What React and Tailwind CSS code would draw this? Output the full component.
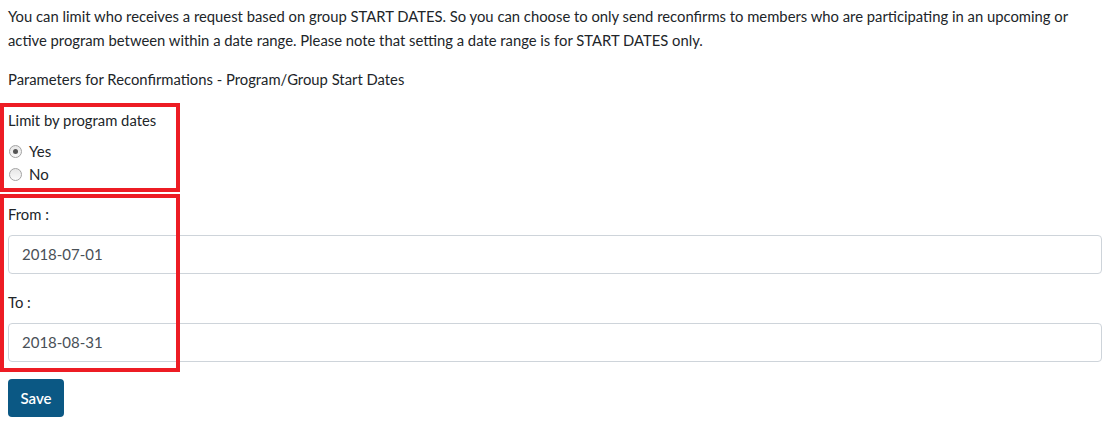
import React, { useState } from 'react';

const font = { fontFamily: 'Lato, "Liberation Sans", sans-serif' };

const Radio = ({ checked, label, onClick }) => (
    <label className="flex items-center h-[23px] cursor-pointer" onClick={onClick}>
        <span className="w-[13px] h-[13px] rounded-full border border-[#a3a3a3] bg-gradient-to-b from-[#e6e6e6] to-[#fafafa] flex items-center justify-center ml-[1px]">
            {checked && <span className="w-[5px] h-[5px] rounded-full bg-[#555]" />}
        </span>
        <span className="ml-[7px] text-[15px] text-[#212529]">{label}</span>
    </label>
);

const DateField = ({ label, value }) => (
    <div>
        <p className="text-[14.8px] text-[#212529] h-[22px] leading-[22px]">{label}</p>
        <div className="mt-[10px] h-[39px] border border-[#ced4da] rounded-[4px] flex items-center px-[13px] text-[15px] text-[#495057]">
            {value}
        </div>
    </div>
);

export default function App() {
    const [limit, setLimit] = useState(true);

    return (
        <div className="relative w-[1113px] h-[426px] bg-white overflow-hidden" style={font}>
            <div className="pl-[8px] pr-[10px] pt-[4px]">
                <p className="text-[14.8px] leading-[24px] text-[#212529]">
                    You can limit who receives a request based on group START DATES. So you can choose to only send reconfirms to members who are participating in an upcoming or active program between within a date range. Please note that setting a date range is for START DATES only.
                </p>
                <p className="mt-[15px] text-[14.8px] leading-[24px] text-[#212529]">
                    Parameters for Reconfirmations - Program/Group Start Dates
                </p>

                <p className="mt-[17px] text-[14.8px] leading-[24px] text-[#212529]">Limit by program dates</p>
                <div className="mt-[8px]">
                    <Radio checked={limit} label="Yes" onClick={() => setLimit(true)} />
                    <Radio checked={!limit} label="No" onClick={() => setLimit(false)} />
                </div>

                <div className="mt-[17px] mr-[1px]">
                    <DateField label="From :" value="2018-07-01" />
                    <div className="mt-[17px]">
                        <DateField label="To :" value="2018-08-31" />
                    </div>
                </div>

                <button className="mt-[17px] w-[56px] h-[38px] rounded-[4px] bg-[#0b5884] text-white text-[15px] font-semibold">
                    Save
                </button>
            </div>

            {/* annotation boxes */}
            <div className="absolute left-0 top-[103px] w-[180px] h-[89px] border-[4px] border-[#ed1c24] pointer-events-none" />
            <div className="absolute left-0 top-[194px] w-[180px] h-[178px] border-[4px] border-[#ed1c24] pointer-events-none" />
        </div>
    );
}
